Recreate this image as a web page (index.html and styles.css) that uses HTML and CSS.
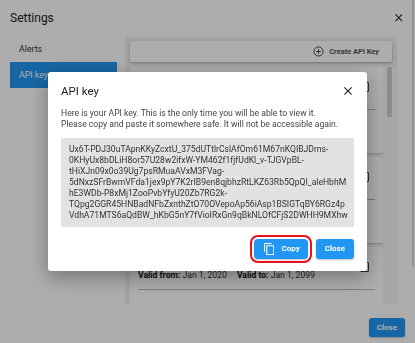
FILE: index.html
```html
<!DOCTYPE html>
<html lang="en">
<head>
  <meta charset="UTF-8">
  <meta name="viewport" content="width=device-width, initial-scale=1.0">
  <title>Settings</title>
  <link rel="stylesheet" href="styles.css">
</head>
<body>

<div class="settings">
  <div class="settings-head">
    <span class="settings-title">Settings</span>
    <svg class="head-close" viewBox="5 5 14 14" width="7.5" height="7.5"><path d="M19 6.41L17.59 5 12 10.59 6.41 5 5 6.41 10.59 12 5 17.59 6.41 19 12 13.41 17.59 19 19 17.59 13.41 12z"/></svg>
  </div>

  <div class="settings-main">
    <div class="side-nav">
      <div class="nav-item">Alerts</div>
      <div class="nav-item active">API keys</div>
    </div>

    <div class="key-panel">
      <div class="create-bar">
        <svg class="plus-icon" viewBox="0 0 24 24" width="11" height="11"><circle cx="12" cy="12" r="10" fill="none" stroke="#333" stroke-width="2"/><path d="M12 7v10M7 12h10" stroke="#333" stroke-width="2"/></svg>
        <span>Create API Key</span>
      </div>

      <div class="key-list">
        <div class="cards">
          <!-- the first two cards sit behind the dialog -->
          <div class="key-card">
            <div class="card-top">
              <div class="card-info"></div>
              <span class="card-icon"></span>
            </div>
            <div class="card-line"></div>
          </div>
          <div class="key-card">
            <div class="card-top">
              <div class="card-info"></div>
              <span class="card-icon"></span>
            </div>
            <div class="card-line"></div>
          </div>
          <div class="key-card">
            <div class="card-top">
              <div class="card-info">
                <div class="card-valid"><b>Valid from:</b> Jan 1, 2020 <b class="to">Valid to:</b> Jan 1, 2099</div>
              </div>
              <span class="card-icon"></span>
            </div>
            <div class="card-line"></div>
          </div>
        </div>
        <div class="track"><div class="thumb"></div></div>
      </div>
    </div>
  </div>

  <div class="settings-foot">
    <button class="btn">Close</button>
  </div>

  <div class="page-scroll"></div>
</div>

<div class="backdrop">
  <div class="modal">
    <div class="modal-head">
      <span class="modal-title">API key</span>
      <svg class="modal-close" viewBox="5 5 14 14" width="8" height="8"><path d="M19 6.41L17.59 5 12 10.59 6.41 5 5 6.41 10.59 12 5 17.59 6.41 19 12 13.41 17.59 19 19 17.59 13.41 12z"/></svg>
    </div>
    <p class="modal-text">Here is your API key. This is the only time you will be able to view it.<br>Please copy and paste it somewhere safe. It will not be accessible again.</p>
    <div class="key-box">Ux6T-PDJ30uTApnKKyZcxtU_375dUTtlrCslAfOm61M67nKQIBJDms-<br>0KHyUx8bDLiH8or57U28w2ifxW-YM462f1fjfUdKl_v-TJGVpBL-<br>tHiXJn09x0o39Ug7psRMuaAVxM3FVag-<br>5dNxzSFrBwmVFda1jex9pY7K2rIB9en8qjbhzRtLKZ63Rb5QpQI_aleHbhM<br>hE3WDb-P8xMj1ZooPvbYfyU20Zb7RG2k-<br>TQpg2GGR45HNBadNFbZxnthZtO70OVepoAp56iAsp1BSIGTqBY6RGz4p<br>VdhA71MTS6aQdBW_hKbG5nY7fVioIRxGn9qBkNLOfCFjS2DWHH9MXhw</div>
    <div class="modal-actions">
      <button class="btn copy-btn">
        <svg viewBox="2 1 19 22" width="10.4" height="12"><path fill="#fff" d="M16 1H4c-1.1 0-2 .9-2 2v14h2V3h12V1zm3 4H8c-1.1 0-2 .9-2 2v14c0 1.1.9 2 2 2h11c1.1 0 2-.9 2-2V7c0-1.1-.9-2-2-2zm0 16H8V7h11v14z"/></svg>
        Copy
      </button>
      <button class="btn">Close</button>
    </div>
  </div>
</div>

</body>
</html>
```

FILE: styles.css
```css
body {
  margin: 0;
  font-family: Roboto, "Noto Sans", sans-serif;
  background: #fff;
  color: #212121;
  height: 343px;
  overflow: hidden;
}

.settings {
  height: 343px;
  display: flex;
  flex-direction: column;
}

.settings-head {
  height: 36px;
  padding: 0 13px 0 10px;
  display: flex;
  align-items: center;
  justify-content: space-between;
}

.settings-title {
  font-size: 12px;
}

.head-close { fill: #222; }

.settings-main {
  display: flex;
  gap: 8px;
  padding: 0 18px 0 10px;
}

.side-nav {
  width: 107px;
  flex-shrink: 0;
}

.nav-item {
  height: 26px;
  line-height: 26px;
  padding-left: 9px;
  font-size: 8.8px;
  color: #333;
}

.nav-item.active {
  background: #2196f3;
  color: #fff;
}

.key-panel {
  flex: 1;
  margin-top: 1px;
  height: 263px;
  background: #f1f1f1;
  padding: 4px 1px 0 5px;
  display: flex;
  flex-direction: column;
  gap: 5px;
}

.create-bar {
  height: 21px;
  margin-right: 4px;
  background: #fff;
  border-radius: 2px;
  box-shadow: 0 1px 3px rgba(0,0,0,0.3);
  display: flex;
  align-items: center;
  justify-content: flex-end;
  gap: 5px;
  padding-right: 13px;
  font-size: 7.4px;
  font-weight: bold;
  color: #555;
}

.key-list {
  flex: 1;
  display: flex;
  overflow: hidden;
}

.cards {
  width: 253px;
  display: flex;
  flex-direction: column;
  gap: 4px;
}

.key-card {
  flex-shrink: 0;
  height: 86px;
  background: #fff;
  border-radius: 2px;
  box-shadow: 0 1px 2px rgba(0,0,0,0.2);
  padding: 8px 8px 0 8px;
  box-sizing: border-box;
}

.card-top {
  height: 24px;
  display: flex;
  align-items: center;
  justify-content: space-between;
}

.card-info {
  align-self: flex-end;
}

.card-valid {
  font-size: 8.6px;
  line-height: 12px;
  color: #333;
  margin-bottom: -2px;
}

.card-valid b { color: #111; }
.card-valid .to { margin-left: 8px; }

.card-icon {
  width: 7px;
  height: 8px;
  border: 1.3px solid #444;
  border-radius: 1px;
  margin-right: 6px;
}

.card-line {
  margin-top: 10px;
  border-top: 1px solid #bbb;
}

.track {
  width: 13px;
  background: #f6f6f6;
}

.thumb {
  width: 5px;
  height: 50px;
  margin-left: 4px;
  background: #cfcfcf;
}

.settings-foot {
  display: flex;
  justify-content: flex-end;
  padding: 14px 10px 0 0;
}

.btn {
  height: 20px;
  padding: 0 9px;
  border: none;
  border-radius: 3px;
  background: #2196f3;
  color: #fff;
  font-family: Roboto, sans-serif;
  font-size: 8px;
  font-weight: bold;
  box-shadow: 0 1px 2px rgba(0,0,0,0.25);
  display: flex;
  align-items: center;
  gap: 7px;
}

.settings-foot .btn {
  height: 19px;
  padding: 0 8px;
}

.page-scroll {
  position: absolute;
  top: 0;
  right: 1px;
  width: 2px;
  height: 267px;
  background: #dcdcdc;
}

.backdrop {
  position: fixed;
  inset: 0;
  background: rgba(0,0,0,0.32);
  display: flex;
  align-items: center;
  justify-content: center;
}

.modal {
  width: 319px;
  box-sizing: border-box;
  background: #fff;
  border-radius: 3px;
  box-shadow: 0 6px 20px rgba(0,0,0,0.35);
  padding: 12px 13px 12px 13px;
}

.modal-head {
  height: 14px;
  display: flex;
  align-items: center;
  justify-content: space-between;
  padding-right: 2px;
}

.modal-title {
  font-size: 11.5px;
}

.modal-close { fill: #222; }

.modal-text {
  margin: 10px 0 8px;
  font-size: 8.6px;
  line-height: 11px;
  color: #444;
}

.key-box {
  background: #e2e2e2;
  padding: 6px 8px;
  font-size: 8.6px;
  line-height: 10.9px;
  color: #333;
  white-space: nowrap;
}

.modal-actions {
  display: flex;
  justify-content: flex-end;
  gap: 8px;
  margin-top: 12px;
}

.copy-btn {
  padding: 0 8px 0 10px;
  outline: 2px solid #e2131d;
  outline-offset: 2px;
  border-radius: 4px;
}
```
